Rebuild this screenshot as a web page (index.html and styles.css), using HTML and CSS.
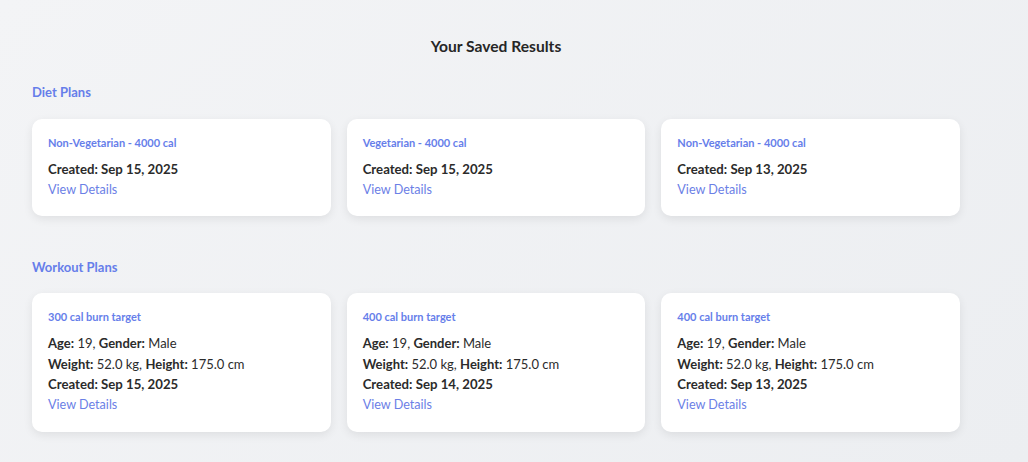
FILE: index.html
```html
<!DOCTYPE html>
<html lang="en">
<head>
<meta charset="utf-8">
<title>Your Saved Results</title>
<link rel="stylesheet" href="styles.css">
</head>
<body>
<main class="page">
  <h1 class="page-title">Your Saved Results</h1>

  <section class="section">
    <h2 class="section-title">Diet Plans</h2>
    <div class="grid">
      <article class="card">
        <h3 class="card-title">Non-Vegetarian - 4000 cal</h3>
        <p class="line strong">Created: Sep 15, 2025</p>
        <a class="link" href="#">View Details</a>
      </article>
      <article class="card">
        <h3 class="card-title">Vegetarian - 4000 cal</h3>
        <p class="line strong">Created: Sep 15, 2025</p>
        <a class="link" href="#">View Details</a>
      </article>
      <article class="card">
        <h3 class="card-title">Non-Vegetarian - 4000 cal</h3>
        <p class="line strong">Created: Sep 13, 2025</p>
        <a class="link" href="#">View Details</a>
      </article>
    </div>
  </section>

  <section class="section section-workout">
    <h2 class="section-title">Workout Plans</h2>
    <div class="grid">
      <article class="card">
        <h3 class="card-title">300 cal burn target</h3>
        <p class="line"><b>Age:</b> 19, <b>Gender:</b> Male</p>
        <p class="line"><b>Weight:</b> 52.0 kg, <b>Height:</b> 175.0 cm</p>
        <p class="line strong">Created: Sep 15, 2025</p>
        <a class="link" href="#">View Details</a>
      </article>
      <article class="card">
        <h3 class="card-title">400 cal burn target</h3>
        <p class="line"><b>Age:</b> 19, <b>Gender:</b> Male</p>
        <p class="line"><b>Weight:</b> 52.0 kg, <b>Height:</b> 175.0 cm</p>
        <p class="line strong">Created: Sep 14, 2025</p>
        <a class="link" href="#">View Details</a>
      </article>
      <article class="card">
        <h3 class="card-title">400 cal burn target</h3>
        <p class="line"><b>Age:</b> 19, <b>Gender:</b> Male</p>
        <p class="line"><b>Weight:</b> 52.0 kg, <b>Height:</b> 175.0 cm</p>
        <p class="line strong">Created: Sep 13, 2025</p>
        <a class="link" href="#">View Details</a>
      </article>
    </div>
  </section>
</main>
</body>
</html>
```

FILE: styles.css
```css
html, body {
  margin: 0;
  padding: 0;
}
body {
  background: linear-gradient(135deg, #f3f4f6 0%, #eceef1 100%);
  font-family: "Segoe UI", Lato, "Noto Sans", "Liberation Sans", sans-serif;
  color: #2b2b2b;
  min-height: 462px;
}
.page {
  width: 928px;
  padding: 36px 0 30px 32px;
}
.page-title {
  margin: 0;
  font-size: 15.6px;
  line-height: 20px;
  font-weight: 700;
  text-align: center;
  color: #262626;
}
.section {
  margin-top: 27px;
}
.section-workout {
  margin-top: 42px;
}
.section-title {
  margin: 0 0 18px;
  font-size: 13px;
  line-height: 18px;
  font-weight: 700;
  color: #667eea;
}
.section-workout .section-title {
  margin-bottom: 17px;
}
.grid {
  display: grid;
  grid-template-columns: repeat(3, 1fr);
  gap: 16px;
}
.card {
  background: #fff;
  border-radius: 10px;
  padding: 16px;
  box-shadow: 0 3px 10px rgba(0, 0, 0, 0.08);
}
.card-title {
  margin: 0 0 8px;
  font-size: 11px;
  line-height: 16px;
  font-weight: 700;
  color: #667eea;
}
.line {
  margin: 0;
  font-size: 13px;
  line-height: 20.6px;
  color: #2b2b2b;
}
.line b,
.strong {
  font-weight: 700;
}
.strong {
  font-size: 13.2px;
}
.link {
  display: block;
  font-size: 12.6px;
  line-height: 20.6px;
  color: #6b80e6;
  text-decoration: none;
}
```
